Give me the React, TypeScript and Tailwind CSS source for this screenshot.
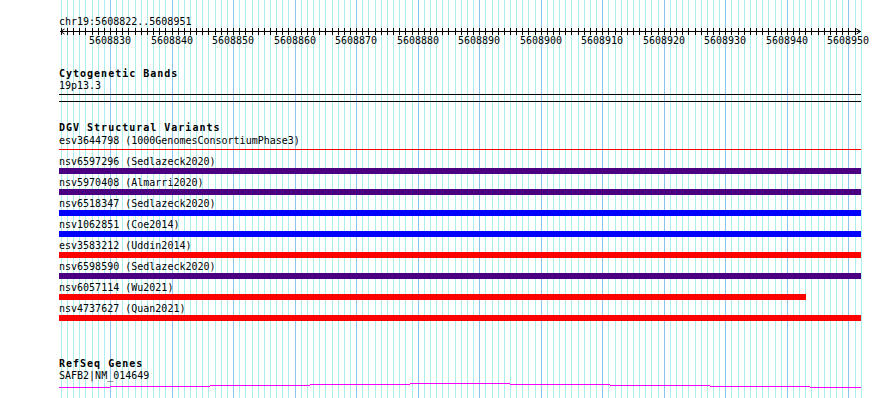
import type { ReactNode } from 'react';

// window: chr19:5608822..5608951, 130 bases over ~800px
const START = 5608822;
const BASES = 130;
const LEFT = 59;
const PX_PER_BASE = 6.153;
const gridX = (i: number) => Math.round(60.8 + i * PX_PER_BASE);
const isMajor = (i: number) => (START + i) % 10 === 0;

const variants = [
  { id: 'nsv6597296', study: 'Sedlazeck2020', bar: 'bg-[#4b0082]' },
  { id: 'nsv5970408', study: 'Almarri2020', bar: 'bg-[#4b0082]' },
  { id: 'nsv6518347', study: 'Sedlazeck2020', bar: 'bg-[#0000ff]' },
  { id: 'nsv1062851', study: 'Coe2014', bar: 'bg-[#0000ff]' },
  { id: 'esv3583212', study: 'Uddin2014', bar: 'bg-[#ff0000]' },
  { id: 'nsv6598590', study: 'Sedlazeck2020', bar: 'bg-[#4b0082]' },
  { id: 'nsv6057114', study: 'Wu2021', bar: 'bg-[#ff0000] w-[747px]' },
  { id: 'nsv4737627', study: 'Quan2021', bar: 'bg-[#ff0000]' },
];

// intron line drifts by a pixel per 100px
const geneSteps = [
  [59, 110, 387],
  [110, 210, 386],
  [210, 310, 385],
  [310, 410, 384],
  [410, 510, 383],
  [510, 610, 384],
  [610, 710, 385],
  [710, 810, 386],
  [810, 861, 387],
];

function GridLines() {
  return (
    <svg className="absolute inset-0" width={890} height={398}>
      {Array.from({ length: BASES + 1 }, (_, i) => (
        <rect
          key={i}
          x={gridX(i)}
          y={0}
          width={1}
          height={398}
          fill={isMajor(i) ? '#88c6ee' : '#aaeeee'}
        />
      ))}
    </svg>
  );
}

function Ruler() {
  const ticks = Array.from({ length: BASES + 1 }, (_, i) => gridX(i) - LEFT);
  const majors = ticks
    .map((x, i) => ({ x, i }))
    .filter(({ i }) => isMajor(i));

  return (
    <>
      <svg width={802} height={9} className="block">
        <rect x={1} y={4} width={801} height={1} fill="#000" />
        {ticks.map((x) => (
          <rect key={x} x={x} y={1} width={1} height={7} fill="#000" />
        ))}
        <path d="M1.5 4.5 L5.5 2 M1.5 4.5 L5.5 7" stroke="#000" fill="none" />
        <path d="M801.5 4.5 L797.5 2 M801.5 4.5 L797.5 7" stroke="#000" fill="none" />
      </svg>
      <svg width={802} height={10} className="block overflow-visible">
        {majors.map(({ x, i }) => (
          <text key={i} x={x} y={8} textAnchor="middle" fontSize={10} fill="#000">
            {START + i}
          </text>
        ))}
      </svg>
    </>
  );
}

function TrackTitle({ children, className }: { children: ReactNode; className?: string }) {
  return (
    <div className={`h-[10px] leading-[10px] font-bold tracking-[1px] ${className ?? ''}`}>
      {children}
    </div>
  );
}

function Line({ children, className }: { children: ReactNode; className?: string }) {
  return <div className={`h-[10px] leading-[10px] whitespace-pre ${className ?? ''}`}>{children}</div>;
}

export default function App() {
  return (
    <div className="relative w-[890px] h-[398px] overflow-hidden bg-white text-black text-[10px] font-['DejaVu_Sans_Mono','Liberation_Mono',monospace]">
      <GridLines />

      <div className="relative w-[861px] pl-[59px] pt-[17px]">
        {/* Base position */}
        <Line>chr19:5608822..5608951</Line>
        <Ruler />

        {/* Cytogenetic bands */}
        <TrackTitle className="mt-[23px]">Cytogenetic Bands</TrackTitle>
        <Line className="mt-[2px]">19p13.3</Line>
        <div className="mt-[3px] h-[8px] border-y border-black" />

        {/* DGV */}
        <TrackTitle className="mt-[21px]">DGV Structural Variants</TrackTitle>
        <div className="mt-[3px]">
          <div className="h-[21px]">
            <Line>esv3644798 (1000GenomesConsortiumPhase3)</Line>
            <div className="mt-[3px] h-px bg-[#ff0000]" />
          </div>
          {variants.map((v) => (
            <div key={v.id} className="h-[21px]">
              <Line>
                {v.id} ({v.study})
              </Line>
              <div className={`mt-px h-[6px] ${v.bar}`} />
            </div>
          ))}
        </div>

        {/* RefSeq */}
        <TrackTitle className="mt-[34px]">RefSeq Genes</TrackTitle>
        <Line className="mt-[2px]">SAFB2|NM_014649</Line>
      </div>

      <svg className="absolute left-0 top-[380px]" width={890} height={10}>
        {geneSteps.map(([x1, x2, y]) => (
          <rect key={x1} x={x1} y={y - 380} width={x2 - x1} height={1} fill="#ff00ff" />
        ))}
      </svg>
    </div>
  );
}
